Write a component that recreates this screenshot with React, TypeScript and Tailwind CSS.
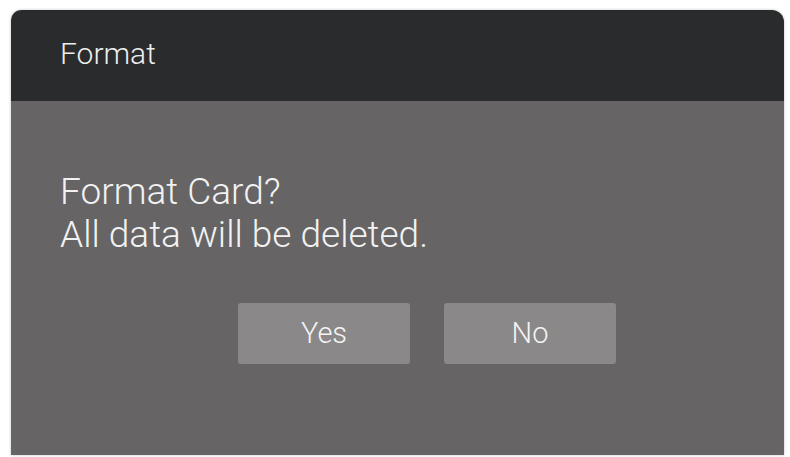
import React from 'react';

// --- Dialog Button ---
const DialogButton = ({ children }: any) => (
  <button className="w-[172px] h-[61px] rounded-[3px] bg-[#8a8888] text-[#f4f4f4] text-[29px] font-light flex items-center justify-center">
    {children}
  </button>
);

export default function App() {
  return (
    <div
      className="w-[790px] h-[457px] bg-white pt-[10px] pl-[11px] pr-[6px] pb-[2px]"
      style={{ fontFamily: 'Roboto, "Noto Sans", sans-serif' }}
    >
      <div className="w-full h-full flex flex-col rounded-tl-[10px] rounded-tr-[12px] overflow-hidden shadow-[0_0_3px_rgba(0,0,0,0.25)]">
        {/* header */}
        <div className="h-[91px] bg-[#2a2b2c] flex items-center pl-[49px] pb-[4px]">
          <span className="text-[30px] font-light text-[#eeeeee]">Format</span>
        </div>
        {/* body */}
        <div className="flex-1 bg-[#666464] pt-[69px] pl-[49px]">
          <div className="text-[37px] font-light text-[#f2f2f2] leading-[43px]">
            <div>Format Card?</div>
            <div>All data will be deleted.</div>
          </div>
          <div className="flex gap-[34px] pl-[178px] mt-[47px]">
            <DialogButton>Yes</DialogButton>
            <DialogButton>No</DialogButton>
          </div>
        </div>
      </div>
    </div>
  );
}
